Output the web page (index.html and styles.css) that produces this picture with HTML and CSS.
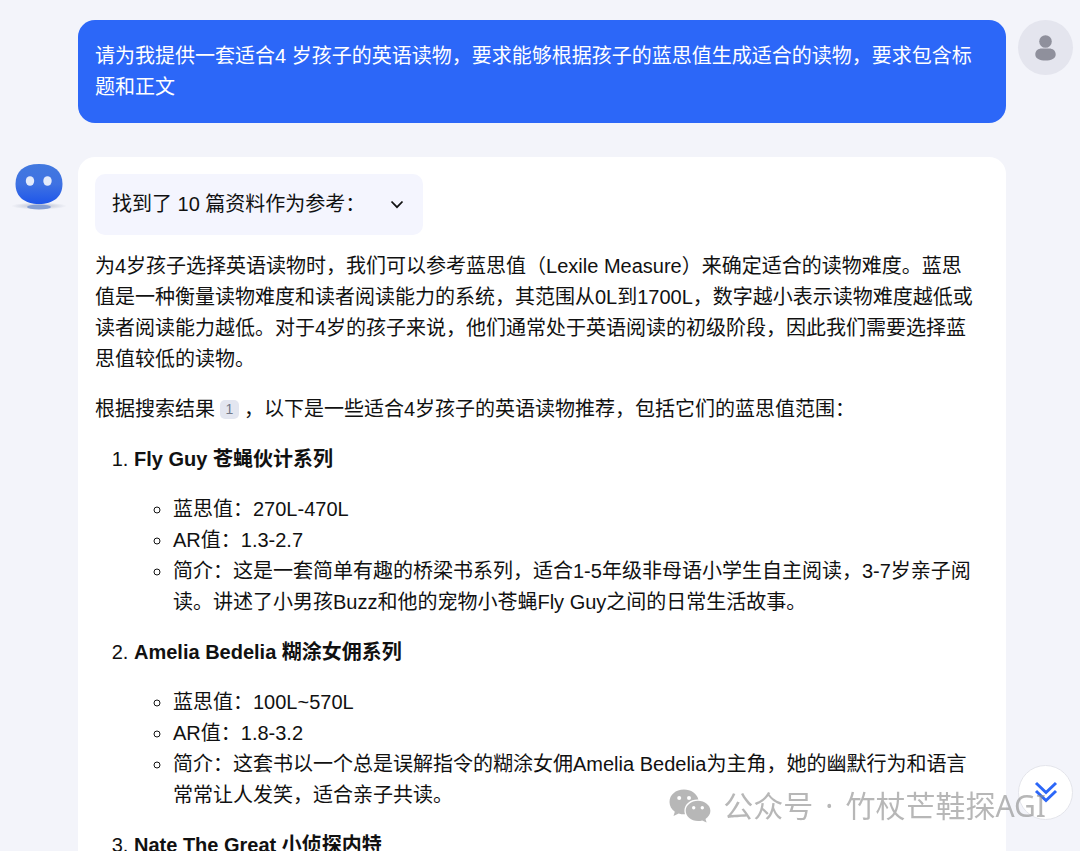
FILE: index.html
```html
<!DOCTYPE html>
<html lang="zh-CN">
<head>
<meta charset="UTF-8">
<meta name="viewport" content="width=device-width, initial-scale=1.0">
<title>英语读物推荐</title>
<link rel="stylesheet" href="styles.css">
</head>
<body>

<main class="chat">

  <!-- 用户提问 -->
  <div class="row">
    <div class="bubble bubble-user">
      <p>请为我提供一套适合4 岁孩子的英语读物，要求能够根据孩子的蓝思值生成适合的读物，要求包含标题和正文</p>
    </div>
    <div class="avatar-user">
      <svg width="55" height="55" viewBox="0 0 55 55">
        <circle cx="27.500" cy="21.500" r="6.300"/>
        <path d="M17.300 34.500c0-3.800 3-5.900 6.500-5.900h7.400c3.500 0 6.500 2.100 6.500 5.900 0 4-4.600 6-10.200 6s-10.200-2-10.200-6z"/>
      </svg>
    </div>
  </div>

  <!-- 机器人回答 -->
  <div class="row">
    <div class="avatar-bot">
      <svg width="64" height="56" viewBox="0 0 64 56">
        <defs>
          <linearGradient id="face" x1="0" y1="0" x2="0" y2="1">
            <stop offset="0" stop-color="#4178df"/>
            <stop offset="0.5" stop-color="#3f72e2"/>
            <stop offset="1" stop-color="#1e56ea"/>
          </linearGradient>
          <radialGradient id="shade">
            <stop offset="0" stop-color="#9ba3b8" stop-opacity="0.7"/>
            <stop offset="1" stop-color="#9ba3b8" stop-opacity="0"/>
          </radialGradient>
        </defs>
        <ellipse cx="32" cy="49" rx="28" ry="3.500" fill="url(#shade)"/>
        <ellipse cx="32" cy="50" rx="12" ry="2.600" fill="#86a0d4"/>
        <path d="M32 7C47 7 55.500 14 55.500 27S46 47 32 47 8.500 40 8.500 27 17 7 32 7z" fill="url(#face)"/>
        <ellipse cx="23" cy="24" rx="4.200" ry="4.800" fill="#e4ebfb"/>
        <ellipse cx="40.500" cy="24" rx="4.200" ry="4.800" fill="#e4ebfb"/>
      </svg>
    </div>
    <div class="bubble bubble-bot">
      <button class="refs" type="button">
        <span>找到了 10 篇资料作为参考：</span>
        <svg width="20" height="20" viewBox="0 0 20 20"><path d="M4.500 6.500l5.500 5.700 5.500-5.700"/></svg>
      </button>

      <p>为4岁孩子选择英语读物时，我们可以参考蓝思值（Lexile Measure）来确定适合的读物难度。蓝思值是一种衡量读物难度和读者阅读能力的系统，其范围从0L到1700L，数字越小表示读物难度越低或读者阅读能力越低。对于4岁的孩子来说，他们通常处于英语阅读的初级阶段，因此我们需要选择蓝思值较低的读物。</p>

      <p>根据搜索结果<a class="cite" href="#ref-1">1</a>，以下是一些适合4岁孩子的英语读物推荐，包括它们的蓝思值范围：</p>

      <ol class="books">
        <li>
          <strong>Fly Guy 苍蝇伙计系列</strong>
          <ul>
            <li>蓝思值：270L-470L</li>
            <li>AR值：1.3-2.7</li>
            <li>简介：这是一套简单有趣的桥梁书系列，适合1-5年级非母语小学生自主阅读，3-7岁亲子阅读。讲述了小男孩Buzz和他的宠物小苍蝇Fly Guy之间的日常生活故事。</li>
          </ul>
        </li>
        <li>
          <strong>Amelia Bedelia 糊涂女佣系列</strong>
          <ul>
            <li>蓝思值：100L~570L</li>
            <li>AR值：1.8-3.2</li>
            <li>简介：这套书以一个总是误解指令的糊涂女佣Amelia Bedelia为主角，她的幽默行为和语言常常让人发笑，适合亲子共读。</li>
          </ul>
        </li>
        <li>
          <strong>Nate The Great 小侦探内特</strong>
        </li>
      </ol>
    </div>
  </div>
</main>

<!-- 回到底部 -->
<button class="to-bottom" type="button" aria-label="回到底部">
  <svg width="28" height="28" viewBox="0 0 28 28"><path d="M4 4l10 9.500L24 4M4 12l10 9.500L24 12"/></svg>
</button>

<!-- 水印 -->
<div class="watermark">
  <svg width="42" height="34" viewBox="0 0 42 34">
    <path fill-rule="evenodd" d="M15 0.500C6.500 0.500 0.500 6 0.500 13c0 4 2 7.300 5.300 9.700L4.500 27l5.200-2.600c1.800.6 3.600.8 5.600.8h.7c-.4-1.200-.6-2.300-.6-3.500 0-6.400 6-11.200 13-11.200h1C27.900 4.500 22 .5 15 .5zM10.200 7a2 2 0 1 1 0 4 2 2 0 0 1 0-4zM20 7a2 2 0 1 1 0 4 2 2 0 0 1 0-4z"/>
    <path fill-rule="evenodd" d="M29 11.800c-6.800 0-12.300 4.400-12.300 10S22.200 32 29 32c1.500 0 2.900-.2 4.200-.6l4.400 2.200-1.100-3.700c3-2 4.900-4.700 4.900-8.100 0-5.600-5.600-10-12.400-10zM24.700 17a1.700 1.700 0 1 1 0 3.400 1.700 1.700 0 0 1 0-3.400zM33.300 17a1.700 1.700 0 1 1 0 3.400 1.700 1.700 0 0 1 0-3.400z"/>
  </svg>
  <span>公众号</span>
  <span>·</span>
  <span>竹杖芒鞋探AGI</span>
</div>

</body>
</html>
```
FILE: styles.css
```css
* {
  margin: 0;
  padding: 0;
  box-sizing: border-box;
}

body {
  font-family: "Liberation Sans", "Noto Sans CJK SC", sans-serif;
  font-size: 20px;
  line-height: 31px;
  color: #111;
  background: #f3f4fa;
}

button {
  font: inherit;
  color: inherit;
  border: none;
  cursor: pointer;
}

/* 对话区 */
.chat {
  height: 100vh;
  overflow: hidden;
  padding-top: 20px;
}

.row {
  display: grid;
  grid-template-columns: 78px 1fr 74px;
  align-items: start;
  margin-bottom: 34px;
}

.bubble {
  grid-column: 2;
  border-radius: 17px;
}

.bubble-user {
  padding: 21px 17px 20px;
  color: #fff;
  background: #2c67f8;
}

.bubble-bot {
  padding: 17px 28px 17px 17px;
  background: #fff;
}

.bubble-bot p {
  margin-bottom: 19px;
}

/* 头像 */
.avatar-user {
  width: 55px;
  height: 55px;
  margin-left: 12px;
  border-radius: 50%;
  background: #e4e5ee;
}

.avatar-user svg {
  display: block;
  fill: #8f909c;
}

.avatar-bot {
  padding-left: 7px;
}

.avatar-bot svg {
  display: block;
}

/* 参考资料 */
.refs {
  display: flex;
  align-items: center;
  gap: 22px;
  padding: 15px 16px 15px 17px;
  margin-bottom: 16px;
  border-radius: 10px;
  background: #f4f5fe;
}

.refs svg {
  fill: none;
  stroke: #111;
  stroke-width: 1.8;
}

.cite {
  display: inline-block;
  width: 19px;
  height: 19px;
  margin: 0 5px;
  border-radius: 5px;
  font-size: 14px;
  line-height: 19px;
  text-align: center;
  text-decoration: none;
  vertical-align: 2px;
  color: #73798a;
  background: #e3e6f0;
}

/* 书单 */
.books {
  padding-left: 39px;
}

.books ul {
  padding-left: 39px;
  margin: 19px 0;
  list-style: circle;
}

/* 浮层 */
.to-bottom {
  position: fixed;
  right: 7px;
  bottom: 31px;
  display: flex;
  align-items: center;
  justify-content: center;
  width: 55px;
  height: 55px;
  border: 1px solid #e3e4ea;
  border-radius: 50%;
  background: #fff;
}

.to-bottom svg {
  fill: none;
  stroke: #2c67f8;
  stroke-width: 3;
}

.watermark {
  position: fixed;
  right: 34px;
  bottom: 27px;
  display: flex;
  align-items: center;
  gap: 12px;
  font-family: "Noto Sans", "Noto Sans CJK SC", sans-serif;
  font-size: 30px;
  line-height: 36px;
  white-space: nowrap;
  color: #888;
  opacity: 0.6;
  pointer-events: none;
}

.watermark svg {
  fill: #888;
}
```
